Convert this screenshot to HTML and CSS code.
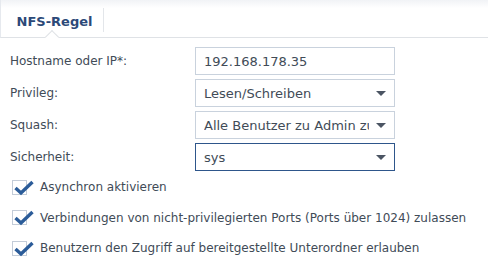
FILE: index.html
```html
<html>
<head>
<title>NFS-Regel</title>
<link rel="stylesheet" href="styles.css">
</head>
<body>
<div class="tabbar">
  <div class="tab active">NFS-Regel</div>
</div>

<div class="form">
  <div class="row">
    <label>Hostname oder IP*:</label>
    <div class="field"><span class="val">192.168.178.35</span></div>
  </div>
  <div class="row">
    <label>Privileg:</label>
    <div class="field combo"><span class="val">Lesen/Schreiben</span><span class="arrow"></span></div>
  </div>
  <div class="row">
    <label>Squash:</label>
    <div class="field combo"><span class="val">Alle Benutzer zu Admin zuordnen</span><span class="arrow"></span></div>
  </div>
  <div class="row">
    <label>Sicherheit:</label>
    <div class="field combo focus"><span class="val">sys</span><span class="arrow"></span></div>
  </div>
</div>

<div class="checks">
  <div class="check">
    <span class="box"><svg width="20" height="16" viewBox="0 0 20 16"><path d="M1.5 8 L7 13 L18.5 2" fill="none" stroke="#2b5c99" stroke-width="3.4"/></svg></span>
    Asynchron aktivieren
  </div>
  <div class="check">
    <span class="box"><svg width="20" height="16" viewBox="0 0 20 16"><path d="M1.5 8 L7 13 L18.5 2" fill="none" stroke="#2b5c99" stroke-width="3.4"/></svg></span>
    Verbindungen von nicht-privilegierten Ports (Ports über 1024) zulassen
  </div>
  <div class="check">
    <span class="box"><svg width="20" height="16" viewBox="0 0 20 16"><path d="M1.5 8 L7 13 L18.5 2" fill="none" stroke="#2b5c99" stroke-width="3.4"/></svg></span>
    Benutzern den Zugriff auf bereitgestellte Unterordner erlauben
  </div>
</div>
</body>
</html>
```

FILE: styles.css
```css
body {
  margin: 0;
  background: #fff;
  font-family: "DejaVu Sans", Verdana, sans-serif;
  font-size: 12px;
  color: #414b57;
}

.tabbar {
  height: 37px;
  background: linear-gradient(#f1f3f6 0px, #fff 8px);
  border-bottom: 1px solid #dfe2e6;
  display: flex;
  border-left: 1px solid #e6e9ee;
}

.tab {
  width: 103px;
  border-right: 1px solid #e3e6ea;
  margin: 8px 0 5px 0;
  padding: 2px 0 0 5px;
  box-sizing: border-box;
  display: flex;
  align-items: center;
  justify-content: center;
  font-weight: bold;
  font-size: 13px;
  color: #2c4978;
  position: relative;
}

.tab.active::after {
  content: "";
  position: absolute;
  left: 46px;
  bottom: -10px;
  width: 9px;
  height: 9px;
  background: #fff;
  border-left: 1px solid #dfe2e6;
  border-top: 1px solid #dfe2e6;
  transform: rotate(45deg);
}

.form {
  padding: 9px 0 0 10px;
  display: flex;
  flex-direction: column;
  gap: 4px;
}

.row {
  display: flex;
  align-items: center;
}

.row label {
  width: 185px;
}

.field {
  width: 190px;
  height: 26px;
  border: 1px solid #c9d2dd;
  display: flex;
  align-items: center;
  padding-left: 8px;
  overflow: hidden;
  font-size: 13px;
}

.field .val {
  white-space: nowrap;
  overflow: hidden;
}

.combo .val {
  width: 165px;
  flex: none;
}

.combo .arrow {
  margin-left: 7px;
  width: 0;
  height: 0;
  border-left: 5px solid transparent;
  border-right: 5px solid transparent;
  border-top: 5px solid #4b5563;
}

.focus {
  border-color: #2e568b;
}

.checks {
  padding: 1px 0 0 12px;
  display: flex;
  flex-direction: column;
}

.check {
  display: flex;
  align-items: center;
  height: 30.5px;
}

.box {
  width: 13px;
  height: 13px;
  border: 1px solid #c3ccd8;
  margin-right: 13px;
  position: relative;
  flex: none;
}

.box svg {
  position: absolute;
  left: 1px;
  top: -1px;
}
```
